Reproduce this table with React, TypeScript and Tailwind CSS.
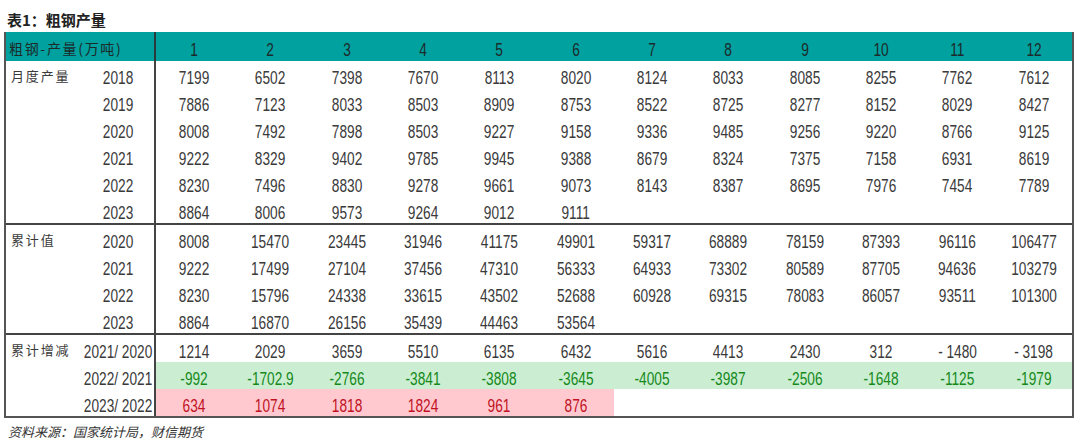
import React from "react";

const cjk = "font-['Noto_Sans_CJK_SC','Noto_Sans',sans-serif]";
const num = "font-['Liberation_Sans',Arial,sans-serif]";

type Row = { label?: string; year: string; vals: (string | number)[] };

const monthly: Row[] = [
  { label: "月度产量", year: "2018", vals: [7199, 6502, 7398, 7670, 8113, 8020, 8124, 8033, 8085, 8255, 7762, 7612] },
  { year: "2019", vals: [7886, 7123, 8033, 8503, 8909, 8753, 8522, 8725, 8277, 8152, 8029, 8427] },
  { year: "2020", vals: [8008, 7492, 7898, 8503, 9227, 9158, 9336, 9485, 9256, 9220, 8766, 9125] },
  { year: "2021", vals: [9222, 8329, 9402, 9785, 9945, 9388, 8679, 8324, 7375, 7158, 6931, 8619] },
  { year: "2022", vals: [8230, 7496, 8830, 9278, 9661, 9073, 8143, 8387, 8695, 7976, 7454, 7789] },
  { year: "2023", vals: [8864, 8006, 9573, 9264, 9012, 9111] },
];

const cumulative: Row[] = [
  { label: "累计值", year: "2020", vals: [8008, 15470, 23445, 31946, 41175, 49901, 59317, 68889, 78159, 87393, 96116, 106477] },
  { year: "2021", vals: [9222, 17499, 27104, 37456, 47310, 56333, 64933, 73302, 80589, 87705, 94636, 103279] },
  { year: "2022", vals: [8230, 15796, 24338, 33615, 43502, 52688, 60928, 69315, 78083, 86057, 93511, 101300] },
  { year: "2023", vals: [8864, 16870, 26156, 35439, 44463, 53564] },
];

function N({ children }: { children: React.ReactNode }) {
  return <span className="inline-block whitespace-nowrap scale-x-[0.76]">{children}</span>;
}

function DataRow({ row, variant }: { row: Row; variant?: "green" | "pink" }) {
  const cells = Array.from({ length: 12 }, (_, i) => row.vals[i]);
  return (
    <div className="flex h-[27px]">
      <div className={`w-[76px] shrink-0 pl-[5px] pt-[2px] whitespace-nowrap text-[13px] leading-[20px] tracking-[0.14em] text-[#3a3a3a] ${cjk} flex items-center`}>
        {row.label ?? ""}
      </div>
      <div className={`w-[74px] shrink-0 border-r-2 border-[#444] flex items-center justify-center pt-[6px] text-[18px] leading-[18px] text-[#3a3a3a] ${num}`}>
        <N>{row.year}</N>
      </div>
      <div className={`grid grid-cols-12 flex-1 ${variant === "green" ? "bg-[#cbeed3]" : ""}`}>
        {cells.map((v, i) => {
          const has = v !== undefined;
          let cls = "text-[#3a3a3a]";
          let bg = "";
          if (variant === "green") cls = "text-[#16891a]";
          if (variant === "pink") {
            cls = "text-[#c0121f]";
            if (has) bg = "bg-[#ffc9cf]";
          }
          return (
            <div
              key={i}
              className={`flex items-center justify-center pt-[6px] text-[18px] leading-[18px] ${num} ${cls} ${bg}`}
            >
              {has ? <N>{v}</N> : ""}
            </div>
          );
        })}
      </div>
    </div>
  );
}

export default function App() {
  return (
    <div className="w-[1080px] h-[443px] bg-white overflow-hidden">
      <div className={`h-[32px] pl-[7px] pt-[10px] text-[15px] font-bold leading-[20px] text-[#222] ${cjk}`}>
        表1：粗钢产量
      </div>
      <div className="ml-[4px] w-[1070px] border-x-2 border-b-2 border-[#555]">
        {/* header */}
        <div className="flex h-[29px] bg-[#00a19f]">
          <div className={`w-[150px] shrink-0 border-r-2 border-[#2b3b3b] pl-[3px] pt-[2px] flex items-center whitespace-nowrap text-[14px] leading-[20px] tracking-[0.12em] text-[#1c2a2a] ${cjk}`}>
            粗钢-产量(万吨)
          </div>
          <div className="grid grid-cols-12 flex-1">
            {Array.from({ length: 12 }, (_, i) => (
              <div key={i} className={`flex items-center justify-center pt-[6px] text-[18px] leading-[18px] text-[#1c2a2a] ${num}`}>
                <N>{i + 1}</N>
              </div>
            ))}
          </div>
        </div>
        {/* monthly */}
        <div className="border-b-2 border-[#444]">
          {monthly.map((r, i) => (
            <DataRow key={i} row={r} />
          ))}
        </div>
        {/* cumulative */}
        <div className="border-b-2 border-[#444]">
          {cumulative.map((r, i) => (
            <DataRow key={i} row={r} />
          ))}
        </div>
        {/* change */}
        <div>
          <DataRow
            row={{ label: "累计增减", year: "2021/ 2020", vals: [1214, 2029, 3659, 5510, 6135, 6432, 5616, 4413, 2430, 312, "- 1480", "- 3198"] }}
          />
          <DataRow
            variant="green"
            row={{ year: "2022/ 2021", vals: [-992, "-1702.9", -2766, -3841, -3808, -3645, -4005, -3987, -2506, -1648, -1125, -1979] }}
          />
          <DataRow variant="pink" row={{ year: "2023/ 2022", vals: [634, 1074, 1818, 1824, 961, 876] }} />
        </div>
      </div>
      <div className={`pl-[8px] pt-[4px] text-[13px] italic text-[#333] ${cjk}`}>
        资料来源：国家统计局，财信期货
      </div>
    </div>
  );
}
